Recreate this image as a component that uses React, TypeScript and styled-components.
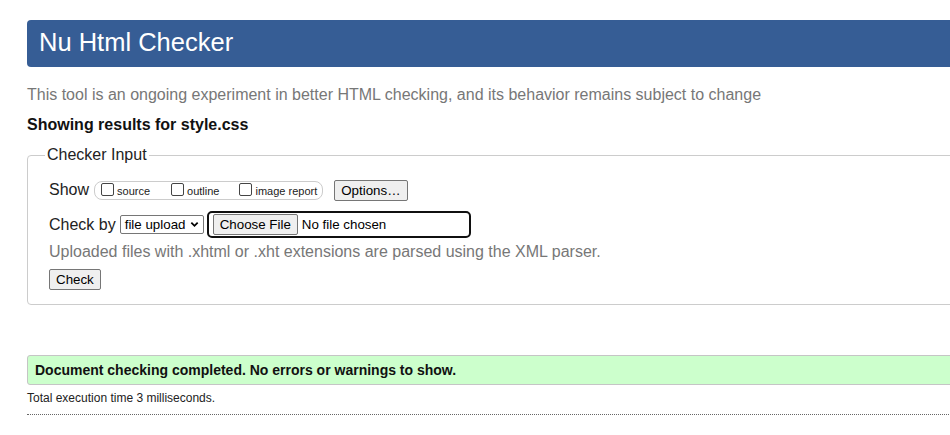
import React from 'react';
import styled, { createGlobalStyle } from 'styled-components';

const GlobalStyle = createGlobalStyle`
  html, body {
    margin: 0;
    padding: 0;
    background: #fff;
    overflow: hidden;
  }
  body {
    font-family: "Liberation Sans", Arial, sans-serif;
    color: #222;
  }
`;

const Page = styled.div`
  width: 1100px;
  padding: 20px 0 0 27px;
`;

const Banner = styled.h1`
  margin: 0;
  height: 47px;
  padding-left: 12px;
  display: flex;
  align-items: center;
  background: #365d95;
  color: #fff;
  font-size: 25.5px;
  font-weight: normal;
  border-radius: 4px;
  padding-bottom: 3px;
  box-sizing: border-box;
`;

const Intro = styled.p`
  margin: 19px 0 0;
  font-size: 16px;
  line-height: 18px;
  color: #777;
`;

const ResultsFor = styled.h2`
  margin: 12px 0 0;
  font-size: 16px;
  line-height: 18px;
  font-weight: bold;
  color: #111;
`;

const Fieldset = styled.fieldset`
  margin: 12px 0 0;
  padding: 16px 0 14px 21px;
  border: 1px solid #ccc;
  border-radius: 4px;
  min-inline-size: 0;
`;

const Legend = styled.legend`
  margin-left: -4px;
  padding: 0 2px;
  font-size: 16px;
  line-height: 18px;
  color: #222;
`;

const Row = styled.div<{ $h: number; $mt?: number }>`
  display: flex;
  align-items: center;
  height: ${p => p.$h}px;
  margin-top: ${p => p.$mt ?? 0}px;
`;

const RowLabel = styled.span<{ $gap?: number }>`
  font-size: 16px;
  color: #222;
  margin-right: ${p => p.$gap ?? 5}px;
`;

const CheckGroup = styled.span`
  display: inline-flex;
  align-items: center;
  height: 17px;
  border: 1px solid #ccc;
  border-radius: 8px;
  padding: 0 5px 0 6px;
  margin-right: 11px;
`;

const CheckItem = styled.label<{ $gap?: number }>`
  display: inline-flex;
  align-items: center;
  font-size: 11px;
  color: #222;
  margin-right: ${p => p.$gap ?? 0}px;
  padding-top: 2px;
`;

const Box = styled.span`
  display: inline-block;
  width: 11px;
  height: 11px;
  border: 1px solid #444;
  border-radius: 2px;
  margin: 0 3px 3px 0;
  background: #fff;
`;

const Button = styled.button`
  font-family: "Liberation Sans", Arial, sans-serif;
  font-size: 13.33px;
  color: #000;
  background: #efefef;
  border: 1px solid #767676;
  border-radius: 2px;
  height: 21px;
  padding: 0 6px;
  line-height: 19px;
`;

const SelectBox = styled.span`
  display: inline-flex;
  align-items: center;
  justify-content: space-between;
  box-sizing: border-box;
  width: 84px;
  height: 19px;
  padding: 0 4px 0 4px;
  border: 1px solid #767676;
  border-radius: 2px;
  font-size: 13.33px;
  color: #000;
  margin-right: 3px;
  svg {
    width: 9px;
    height: 9px;
  }
`;

const FileRing = styled.span`
  display: inline-flex;
  align-items: center;
  box-sizing: border-box;
  width: 264px;
  height: 27px;
  border: 2px solid #101010;
  border-radius: 5px;
  padding-left: 4px;
  font-size: 13.33px;
  color: #000;
  ${Button} {
    margin-right: 4px;
  }
`;

const Hint = styled.p`
  margin: 5px 0 0;
  font-size: 16px;
  line-height: 18px;
  color: #777;
`;

const Success = styled.div`
  margin-top: 50px;
  height: 30px;
  box-sizing: border-box;
  display: flex;
  align-items: center;
  padding: 0 0 1px 7px;
  background: #ccffcc;
  border: 1px solid #c5c5c5;
  border-radius: 3px;
  font-size: 14px;
  font-weight: bold;
  color: #111;
`;

const Timing = styled.p`
  margin: 6px 0 0;
  font-size: 12px;
  line-height: 14px;
  color: #222;
`;

const Rule = styled.hr`
  margin: 9px 0 0;
  border: 0;
  border-top: 1px dotted #666;
`;

function Check({ label, gap }: { label: string; gap?: number }) {
  return (
    <CheckItem $gap={gap}>
      <Box />
      {label}
    </CheckItem>
  );
}

export default function App() {
  return (
    <>
      <GlobalStyle />
      <Page>
        <Banner>Nu Html Checker</Banner>
        <Intro>This tool is an ongoing experiment in better HTML checking, and its behavior remains subject to change</Intro>
        <ResultsFor>Showing results for style.css</ResultsFor>
        <Fieldset>
          <Legend>Checker Input</Legend>
          <Row $h={20}>
            <RowLabel>Show</RowLabel>
            <CheckGroup>
              <Check label="source" gap={21} />
              <Check label="outline" gap={20} />
              <Check label="image report" />
            </CheckGroup>
            <Button>Options…</Button>
          </Row>
          <Row $h={27} $mt={11}>
            <RowLabel $gap={4}>Check by</RowLabel>
            <SelectBox>
              file upload
              <svg viewBox="0 0 10 10">
                <path d="M1.5 3 L5 6.5 L8.5 3" fill="none" stroke="#000" strokeWidth="2" />
              </svg>
            </SelectBox>
            <FileRing>
              <Button>Choose File</Button>
              No file chosen
            </FileRing>
          </Row>
          <Hint>Uploaded files with .xhtml or .xht extensions are parsed using the XML parser.</Hint>
          <Row $h={21} $mt={8}>
            <Button>Check</Button>
          </Row>
        </Fieldset>
        <Success>Document checking completed. No errors or warnings to show.</Success>
        <Timing>Total execution time 3 milliseconds.</Timing>
        <Rule />
      </Page>
    </>
  );
}
